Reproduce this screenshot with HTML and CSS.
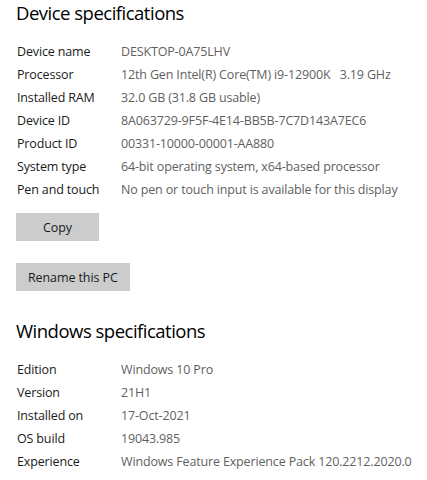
FILE: index.html
```html
<!DOCTYPE html>
<html>
<head>
<meta charset="utf-8">
<link rel="stylesheet" href="styles.css">
</head>
<body>
<div class="page">
  <h2 class="heading">Device specifications</h2>
  <div class="specs">
    <div class="label">Device name</div><div class="value">DESKTOP-0A75LHV</div>
    <div class="label">Processor</div><div class="value">12th Gen Intel(R) Core(TM) i9-12900K&nbsp;&nbsp;&nbsp;3.19 GHz</div>
    <div class="label">Installed RAM</div><div class="value">32.0 GB (31.8 GB usable)</div>
    <div class="label">Device ID</div><div class="value">8A063729-9F5F-4E14-BB5B-7C7D143A7EC6</div>
    <div class="label">Product ID</div><div class="value">00331-10000-00001-AA880</div>
    <div class="label">System type</div><div class="value">64-bit operating system, x64-based processor</div>
    <div class="label">Pen and touch</div><div class="value">No pen or touch input is available for this display</div>
  </div>
  <div class="actions">
    <button class="btn btn-copy">Copy</button>
    <button class="btn">Rename this PC</button>
  </div>
  <h2 class="heading heading-second">Windows specifications</h2>
  <div class="specs">
    <div class="label">Edition</div><div class="value">Windows 10 Pro</div>
    <div class="label">Version</div><div class="value">21H1</div>
    <div class="label">Installed on</div><div class="value">17-Oct-2021</div>
    <div class="label">OS build</div><div class="value">19043.985</div>
    <div class="label">Experience</div><div class="value">Windows Feature Experience Pack 120.2212.2020.0</div>
  </div>
</div>
</body>
</html>
```
FILE: styles.css
```css
html, body {
  margin: 0;
  padding: 0;
  background: #ffffff;
}
.page {
  padding: 0 0 0 16px;
  font-family: "Open Sans", "Noto Sans", sans-serif;
  color: #1a1a1a;
}
.heading {
  margin: 0;
  font-size: 18.5px;
  letter-spacing: -0.5px;
  font-weight: 400;
  line-height: 26px;
  color: #000000;
}
.heading-second {
  margin-top: 27px;
}
.specs {
  display: grid;
  grid-template-columns: 105px 1fr;
  margin-top: 14px;
  font-size: 12.5px;
  letter-spacing: -0.15px;
  line-height: 23px;
}
.label {
  padding-left: 1px;
  color: #1a1a1a;
}
.value {
  color: #5f5f5f;
  white-space: nowrap;
}
.actions {
  display: flex;
  flex-direction: column;
  align-items: flex-start;
  gap: 22px;
  margin-top: 12px;
}
.btn {
  font-family: inherit;
  font-size: 12.5px;
  letter-spacing: -0.1px;
  color: #1a1a1a;
  background: #cccccc;
  border: none;
  height: 28px;
  padding: 0 12px;
  margin: 0;
}
.btn-copy {
  min-width: 83px;
}
```
